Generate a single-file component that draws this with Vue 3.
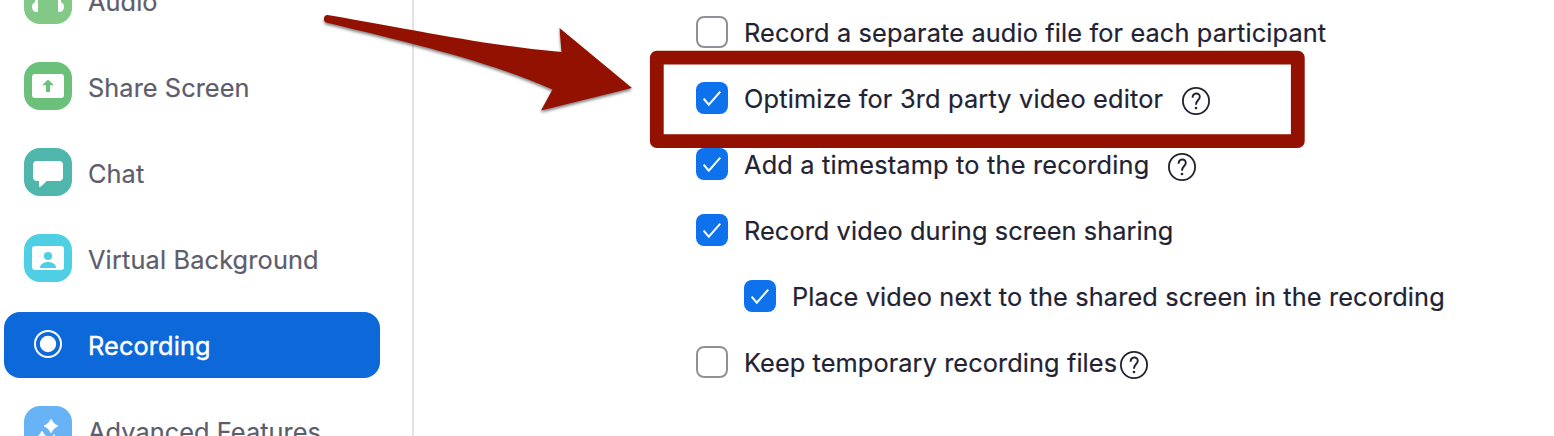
<script setup>
const navItems = [
  { id: 'audio', label: 'Audio' },
  { id: 'share', label: 'Share Screen' },
  { id: 'chat', label: 'Chat' },
  { id: 'background', label: 'Virtual Background' },
  { id: 'recording', label: 'Recording', active: true },
  { id: 'advanced', label: 'Advanced Features' },
]

const options = [
  { id: 'separate', label: 'Record a separate audio file for each participant', checked: false },
  { id: 'optimize', label: 'Optimize for 3rd party video editor', checked: true, help: true },
  { id: 'timestamp', label: 'Add a timestamp to the recording', checked: true, help: true },
  { id: 'sharing', label: 'Record video during screen sharing', checked: true },
  { id: 'place', label: 'Place video next to the shared screen in the recording', checked: true, nested: true },
  { id: 'temporary', label: 'Keep temporary recording files', checked: false, help: true },
]
</script>

<template>
  <div class="window">
    <nav class="sidebar">
      <div v-for="item in navItems" :key="item.id" class="nav-item" :class="[item.id, { active: item.active }]">
        <span class="nav-icon">
          <svg v-if="item.id === 'audio'" viewBox="0 0 48 48">
            <path d="M12.500 24v-1a11.500 11.500 0 0 1 23 0v1" fill="none" stroke="#fff" stroke-width="3" />
            <path d="M14 23v13h-1.500a4.500 5 0 0 1-1.500-9.700V23zM34 23v13h1.500a4.500 5 0 0 0 1.500-9.700V23z" fill="#fff" />
          </svg>
          <svg v-else-if="item.id === 'share'" viewBox="0 0 48 48">
            <rect x="8" y="12" width="32" height="24" rx="3" fill="#fff" />
            <path d="M24 17.500l6 5.800h-4v6.700h-4v-6.700h-4z" fill="#6cc17a" />
          </svg>
          <svg v-else-if="item.id === 'chat'" viewBox="0 0 48 48">
            <path d="M13 13h22a4 4 0 0 1 4 4v12a4 4 0 0 1-4 4H22.800l-5.800 5.600q-2 .9-2-.6v-5h-2a4 4 0 0 1-4-4V17a4 4 0 0 1 4-4z" fill="#fff" />
          </svg>
          <svg v-else-if="item.id === 'background'" viewBox="0 0 48 48">
            <rect x="8" y="12" width="32" height="24" rx="3" fill="#fff" />
            <circle cx="24" cy="22" r="4.100" fill="#4fcfe3" />
            <path d="M16 34c0-8 16-8 16 0z" fill="#4fcfe3" />
          </svg>
          <svg v-else-if="item.id === 'recording'" viewBox="0 0 48 48">
            <circle cx="24" cy="24" r="13" fill="none" stroke="#fff" stroke-width="2" />
            <circle cx="24" cy="24" r="8.200" fill="#fff" />
          </svg>
          <svg v-else viewBox="0 0 48 48">
            <path d="M27 13q2 5 7 7q-5 2-7 7q-2-5-7-7q5-2 7-7z" fill="#fff" stroke="#fff" stroke-width=".6" />
            <path d="M18 25q2.500 5.500 8 8q-5.500 2.500-8 8q-2.500-5.500-8-8q5.500-2.500 8-8z" fill="#fff" stroke="#fff" stroke-width=".6" />
            <path d="M30 27.500l1.500 3.500l3.500 1.500l-3.500 1.500l-1.500 3.500l-1.500-3.500l-3.500-1.500l3.500-1.500z" fill="#fff" />
          </svg>
        </span>
        <span class="nav-label">{{ item.label }}</span>
      </div>
    </nav>

    <main class="settings">
      <div v-for="option in options" :key="option.id" class="option" :class="[option.id, { nested: option.nested }]">
        <span class="checkbox" :class="{ checked: option.checked }">
          <svg v-if="option.checked" viewBox="0 0 32 32">
            <path d="M7.600 16.700l5.200 6L24.300 9.700" fill="none" stroke="#fff" stroke-width="2" />
          </svg>
        </span>
        <span class="option-label">{{ option.label }}</span>
        <svg v-if="option.help" class="help" viewBox="0 0 28 28">
          <circle cx="14" cy="14" r="13.100" fill="none" stroke="#222233" stroke-width="1.800" />
          <path d="M10.600 10.800c0-5.600 7.200-5.400 7.200-1c0 3.400-3.800 3.200-3.800 8" fill="none" stroke="#222233" stroke-width="1.900" />
          <circle cx="14" cy="21" r="1.300" fill="#222233" />
        </svg>
      </div>
    </main>

    <svg class="annotation" viewBox="0 0 1554 436">
      <path class="arrow" d="M327.500 15C420 31 490 46 561.500 52L559.500 28L632 88L541 110.500L552.500 89.500C490 62 420 45 327 22.700A3.900 3.900 0 0 1 327.500 15Z" />
      <rect x="656.800" y="57.600" width="641" height="83.600" />
    </svg>
  </div>
</template>

<style>
body {
  margin: 0;
  background: #fff;
}
</style>

<style scoped>
.window {
  position: relative;
  display: flex;
  width: 1554px;
  height: 436px;
  overflow: hidden;
  background: #fff;
  font-family: Inter, "Liberation Sans", sans-serif;
  font-size: 25.3px;
  line-height: 32px;
}
.sidebar {
  box-sizing: border-box;
  flex: none;
  display: flex;
  flex-direction: column;
  gap: 20px;
  width: 414px;
  height: 520px;
  margin-top: -32px;
  padding-left: 4px;
  border-right: 2px solid #e4e4e5;
}
.nav-item {
  box-sizing: border-box;
  flex: none;
  display: flex;
  gap: 16px;
  width: 376px;
  height: 66px;
  padding: 8px 20px;
  border-radius: 16px;
  color: #5d5d6e;
  letter-spacing: 0.08px;
}
.nav-item.background { letter-spacing: 0.16px; }
.nav-item.recording { letter-spacing: 0.14px; }
.nav-item.active {
  background: #0d68d9;
  color: #fff;
}
.nav-icon {
  flex: none;
  width: 48px;
  height: 48px;
  border-radius: 16px;
}
.nav-icon svg,
.checkbox svg {
  display: block;
}
.audio .nav-icon { background: #82c887; }
.share .nav-icon { background: #6cc17a; }
.chat .nav-icon { background: #4fb6ac; }
.background .nav-icon { background: #4fcfe3; }
.advanced .nav-icon { background: #67b3f6; }
.nav-label {
  margin-top: 10px;
  white-space: nowrap;
  -webkit-text-stroke: 0.2px currentColor;
}
.active .nav-label {
  -webkit-text-stroke: 0.4px #fff;
}
.settings {
  display: flex;
  flex-direction: column;
  gap: 34px;
  padding: 16px 0 0 282px;
}
.option {
  display: flex;
  height: 32px;
  color: #222233;
}
.option.nested {
  padding-left: 48px;
}
.option.separate { letter-spacing: 0.135px; }
.option.optimize { letter-spacing: 0.19px; }
.option.timestamp { letter-spacing: 0.2px; }
.option.sharing { letter-spacing: 0.09px; }
.option.place { letter-spacing: 0.14px; }
.option.temporary { letter-spacing: 0.1px; }
.checkbox {
  box-sizing: border-box;
  flex: none;
  width: 32px;
  height: 32px;
  margin-right: 16px;
  border: 2px solid #909096;
  border-radius: 8px;
}
.checkbox.checked {
  border: 0;
  background: #0e72ed;
}
.option-label {
  margin-top: 1px;
  white-space: nowrap;
  -webkit-text-stroke: 0.2px currentColor;
}
.help {
  flex: none;
  width: 28px;
  height: 28px;
  margin: 5px 0 0 19px;
}
.temporary .help {
  margin-left: 3px;
}
.annotation {
  position: absolute;
  inset: 0;
  width: 1554px;
  height: 436px;
  pointer-events: none;
}
.annotation .arrow {
  fill: #931100;
  filter: drop-shadow(0 2px 1.5px rgba(0, 0, 0, 0.5));
}
.annotation rect {
  fill: none;
  stroke: #931100;
  stroke-width: 13.800px;
  stroke-linejoin: round;
}
</style>
